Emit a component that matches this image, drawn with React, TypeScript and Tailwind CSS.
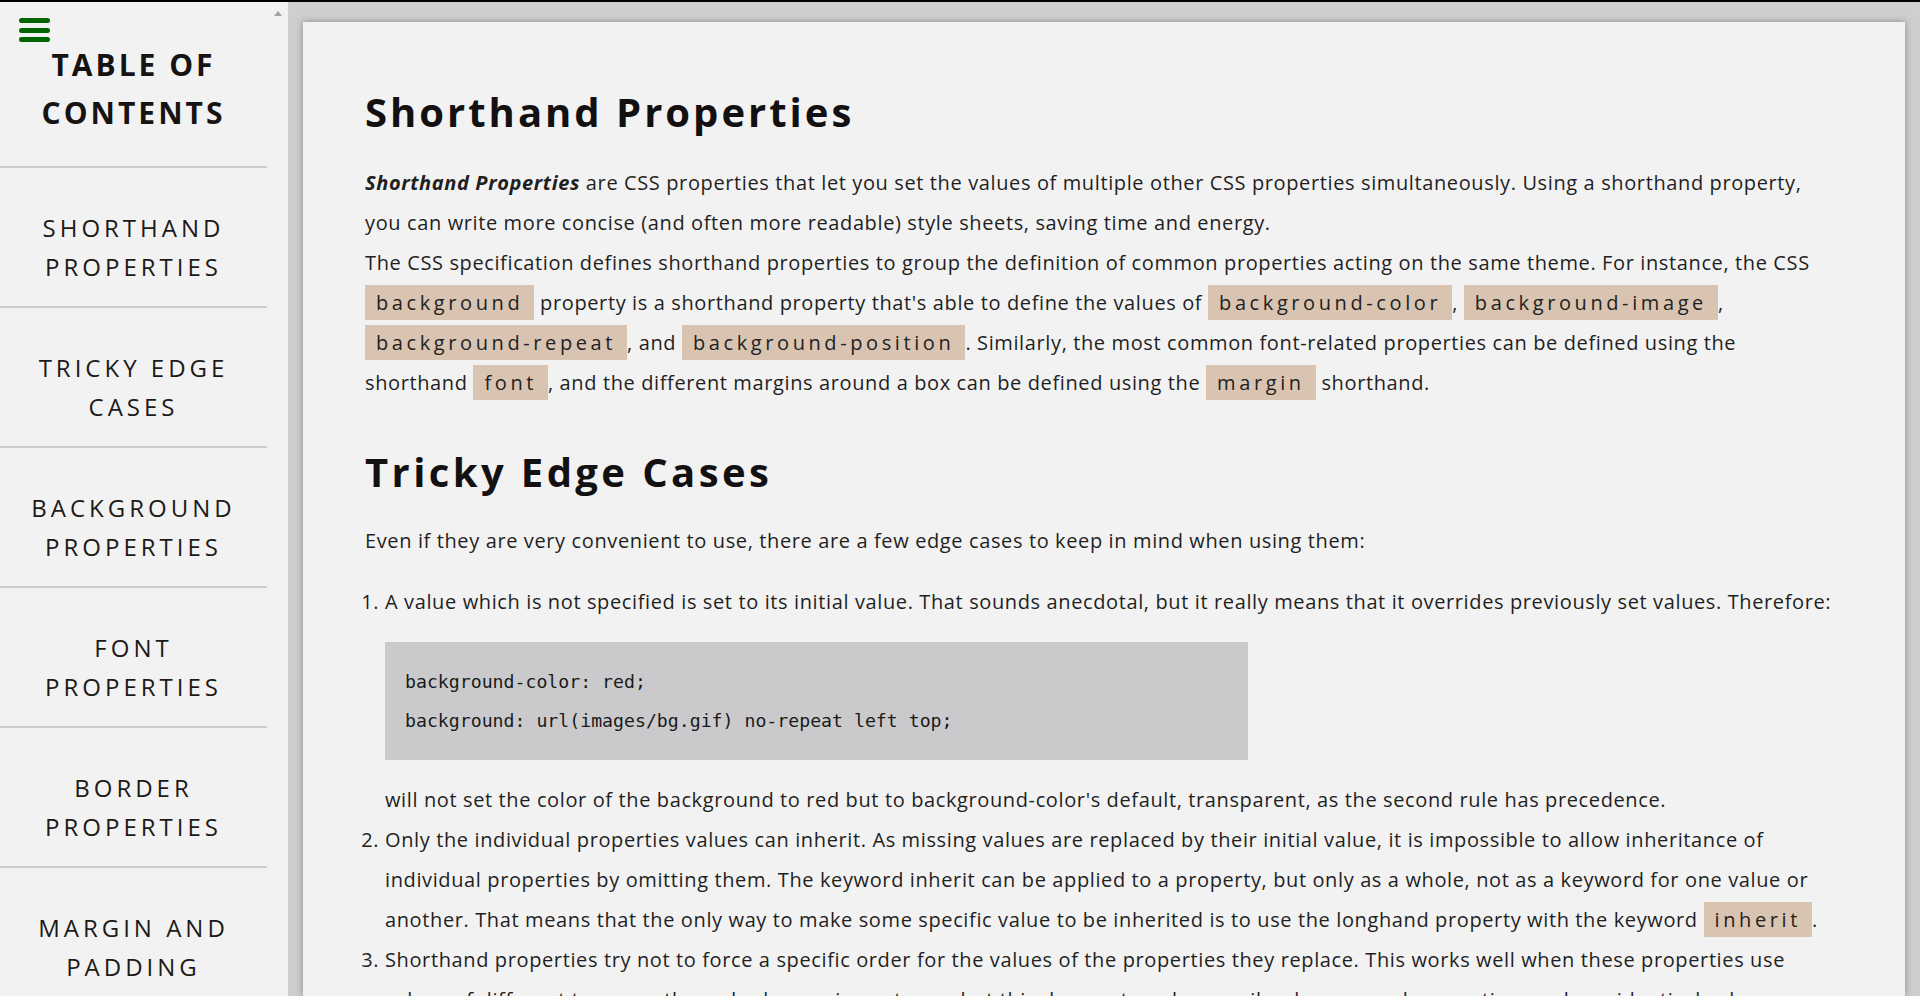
import type { ReactNode } from "react";

const navItems = [
  "SHORTHAND PROPERTIES",
  "TRICKY EDGE CASES",
  "BACKGROUND PROPERTIES",
  "FONT PROPERTIES",
  "BORDER PROPERTIES",
  "MARGIN AND PADDING",
  "BOX MODEL",
];

function Code({ children }: { children: ReactNode }) {
  return (
    <code className="whitespace-nowrap bg-[#d9c4b1] px-[11px] py-[4px] font-['Open_Sans',sans-serif] tracking-[3.6px] text-[#222]">
      {children}
    </code>
  );
}

function Sidebar() {
  return (
    <aside className="w-[288px] shrink-0 bg-[#f2f2f2] flex overflow-hidden">
      <nav className="w-[267px] shrink-0">
        <div className="border-b-2 border-[#cccccc] pt-[16px] pb-[29px]">
          <button className="ml-[19px] flex flex-col gap-[4.5px] w-[31px]">
            <span className="h-[5px] rounded-full bg-[#006400]" />
            <span className="h-[5px] rounded-full bg-[#006400]" />
            <span className="h-[5px] rounded-full bg-[#006400]" />
          </button>
          <h2 className="-mt-px text-center text-[30px] leading-[48px] font-bold tracking-[3px] text-[#161412]">
            TABLE OF
            <br />
            CONTENTS
          </h2>
        </div>
        <ul>
          {navItems.map((item) => (
            <li
              key={item}
              className="h-[140px] border-b-2 border-[#cccccc] px-[10px] pt-[40px] text-center text-[24px] leading-[39px] tracking-[4px] text-[#1c1a18]"
            >
              {item}
            </li>
          ))}
        </ul>
      </nav>
      <div className="flex-1 flex justify-center pt-[9px]">
        <div className="w-0 h-0 border-l-[4px] border-r-[4px] border-b-[5px] border-l-transparent border-r-transparent border-b-[#a3a3a3]" />
      </div>
    </aside>
  );
}

export default function App() {
  return (
    <div className="h-[996px] overflow-hidden flex flex-col bg-[#cfcfcf] font-['Open_Sans',sans-serif] text-[#1f1f1f]">
      <div className="h-[2px] shrink-0 bg-black" />
      <div className="flex flex-1 min-h-0">
        <Sidebar />
        <main className="flex-1 min-w-0 pt-[20px] px-[15px]">
          <article className="h-full bg-[#f2f2f2] shadow-[0_0_7px_rgba(0,0,0,0.35)] pl-[62px] pr-[70px] pt-[66px] text-[20px] leading-[40px] tracking-[0.62px]">
            {/* Shorthand Properties */}
            <h1 className="text-[40px] leading-[48px] font-bold tracking-[3px] text-[#121010]">
              Shorthand Properties
            </h1>
            <p className="mt-[27px]">
              <strong className="italic font-bold">Shorthand Properties</strong> are CSS
              properties that let you set the values of multiple other CSS properties
              simultaneously. Using a shorthand property, you can write more concise (and
              often more readable) style sheets, saving time and energy.
            </p>
            <p>
              The CSS specification defines shorthand properties to group the definition of
              common properties acting on the same theme. For instance, the CSS{" "}
              <Code>background</Code> property is a shorthand property that's able to define
              the values of <Code>background-color</Code>, <Code>background-image</Code>,{" "}
              <Code>background-repeat</Code>, and <Code>background-position</Code>.
              Similarly, the most common font-related properties can be defined using the
              shorthand <Code>font</Code>, and the different margins around a box can be
              defined using the <Code>margin</Code> shorthand.
            </p>

            {/* Tricky Edge Cases */}
            <h2 className="mt-[45px] text-[40px] leading-[48px] font-bold tracking-[3.4px] text-[#121010]">
              Tricky Edge Cases
            </h2>
            <p className="mt-[25px]">
              Even if they are very convenient to use, there are a few edge cases to keep in
              mind when using them:
            </p>
            <ol className="mt-[21px] list-decimal pl-[20px]">
              <li>
                A value which is not specified is set to its initial value. That sounds
                anecdotal, but it really means that it overrides previously set values.
                Therefore:
                <pre className="my-[20px] w-[59.5%] bg-[#cacacc] px-[20px] py-[20px] font-['DejaVu_Sans_Mono',monospace] text-[18.2px] leading-[39px] tracking-normal text-[#1a1a1a]">
                  background-color: red;
                  {"\n"}
                  background: url(images/bg.gif) no-repeat left top;
                </pre>
                will not set the color of the background to red but to background-color's
                default, transparent, as the second rule has precedence.
              </li>
              <li>
                Only the individual properties values can inherit. As missing values are
                replaced by their initial value, it is impossible to allow inheritance of
                individual properties by omitting them. The keyword inherit can be applied to
                a property, but only as a whole, not as a keyword for one value or another.
                That means that the only way to make some specific value to be inherited is to
                use the longhand property with the keyword <Code>inherit</Code>.
              </li>
              <li>
                Shorthand properties try not to force a specific order for the values of the
                properties they replace. This works well when these properties use values of
                different types, as the order has no importance, but this does not work as
                easily when several properties can have identical values.
              </li>
            </ol>
          </article>
        </main>
      </div>
    </div>
  );
}
